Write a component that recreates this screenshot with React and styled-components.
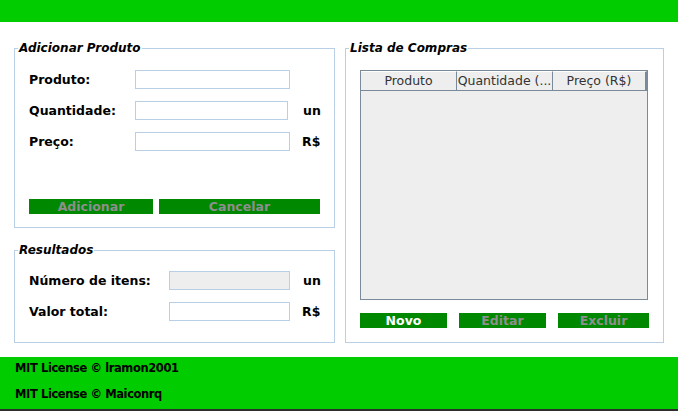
import React from 'react';
import styled, { createGlobalStyle } from 'styled-components';

const GlobalStyle = createGlobalStyle`
  html, body {
    margin: 0;
    padding: 0;
    background: #ffffff;
  }
  body {
    font-family: "DejaVu Sans", sans-serif;
    color: #000000;
  }
`

const Window = styled.div`
  width: 678px;
  height: 411px;
  display: flex;
  flex-direction: column;
  background: #ffffff;
  overflow: hidden;
`
const Topbar = styled.div`
  height: 22px;
  background: #00cc00;
`
const Main = styled.div`
  height: 335px;
  box-sizing: border-box;
  padding: 19px 0 0 14px;
  display: flex;
  gap: 10px;
`
const LeftColumn = styled.div`
  width: 321px;
  display: flex;
  flex-direction: column;
  gap: 15px;
`
const Panel = styled.fieldset`
  margin: 0;
  min-width: 0;
  box-sizing: border-box;
  height: ${p => p.h}px;
  width: ${p => p.w}px;
  border: 1px solid #b8cfe5;
  padding: ${p => p.pad};
  display: flex;
  flex-direction: column;
`
const Title = styled.legend`
  font-family: "DejaVu Sans", sans-serif;
  font-size: 12px;
  font-weight: bold;
  font-style: italic;
  line-height: 14px;
  padding: 0 1px;
  margin-left: -11px;
`
const Form = styled.div`
  display: grid;
  grid-template-columns: ${p => p.labelWidth}px ${p => p.fieldWidth}px auto;
  row-gap: 12px;
  align-items: center;
`
const Label = styled.span`
  font-size: 12.5px;
  font-weight: bold;
  line-height: 19px;
`
const Field = styled.div`
  box-sizing: border-box;
  height: 19px;
  width: ${p => p.w || '100%'};
  border: 1px solid #b8cfe5;
  background: ${p => (p.readOnly ? '#eeeeee' : '#ffffff')};
`
const Unit = styled.span`
  font-size: 12.5px;
  font-weight: bold;
  margin-left: ${p => p.ml || 13}px;
`
const ButtonRow = styled.div`
  display: flex;
  gap: ${p => p.gap}px;
  margin-top: ${p => p.mt}px;
`
const Button = styled.div`
  box-sizing: border-box;
  width: ${p => p.w}px;
  height: 15px;
  background: #008800;
  color: ${p => (p.active ? '#ffffff' : '#8e8e8e')};
  font-size: 12.5px;
  font-weight: bold;
  line-height: 15px;
  text-align: center;
`
const Table = styled.div`
  box-sizing: border-box;
  height: 230px;
  width: 288px;
  border: 1px solid #7a8a99;
  background: #eeeeee;
  display: flex;
  flex-direction: column;
`
const HeaderRow = styled.div`
  display: flex;
  height: 19px;
  border-bottom: 1px solid #7a8a99;
`
const HeaderCell = styled.div`
  box-sizing: border-box;
  width: ${p => p.w}px;
  border-right: ${p => (p.last ? '2px' : '1px')} solid #7a8a99;
  border-top: 1px solid #ffffff;
  padding: 0;
  font-size: 12.5px;
  line-height: 18px;
  color: #333333;
  text-align: center;
  white-space: nowrap;
  overflow: hidden;
`
const Footer = styled.div`
  height: 52px;
  background: #00cc00;
  padding-left: 15px;
  display: flex;
  flex-direction: column;
`
const FooterLine = styled.div`
  height: 26px;
  line-height: 22px;
  font-size: 11.5px;
  font-weight: bold;
  letter-spacing: -0.4px;
`
const BottomEdge = styled.div`
  height: 2px;
  background: #2d2d2d;
`

export default function App() {
  return (
    <>
      <GlobalStyle />
      <Window>
        <Topbar />
        <Main>
          <LeftColumn>
            <Panel h={187} w={321} pad="15px 13px 13px 14px">
              <Title>Adicionar Produto</Title>
              <Form labelWidth={106} fieldWidth={155}>
                <Label>Produto:</Label>
                <Field />
                <span />
                <Label>Quantidade:</Label>
                <Field w="153px" />
                <Unit>un</Unit>
                <Label>Preço:</Label>
                <Field />
                <Unit ml={12}>R$</Unit>
              </Form>
              <ButtonRow gap={6} mt={48}>
                <Button w={124}>Adicionar</Button>
                <Button w={161}>Cancelar</Button>
              </ButtonRow>
            </Panel>
            <Panel h={100} w={321} pad="14px 13px 13px 14px">
              <Title>Resultados</Title>
              <Form labelWidth={140} fieldWidth={121}>
                <Label>Número de itens:</Label>
                <Field readOnly />
                <Unit>un</Unit>
                <Label>Valor total:</Label>
                <Field />
                <Unit ml={12}>R$</Unit>
              </Form>
            </Panel>
          </LeftColumn>
          <Panel h={302} w={319} pad="15px 14px 14px 14px">
            <Title>Lista de Compras</Title>
            <Table>
              <HeaderRow>
                <HeaderCell w={96}>Produto</HeaderCell>
                <HeaderCell w={96}>Quantidade (...</HeaderCell>
                <HeaderCell w={94} last>Preço (R$)</HeaderCell>
              </HeaderRow>
            </Table>
            <ButtonRow gap={12} mt={13}>
              <Button w={87} active>Novo</Button>
              <Button w={87}>Editar</Button>
              <Button w={91}>Excluir</Button>
            </ButtonRow>
          </Panel>
        </Main>
        <Footer>
          <FooterLine>MIT License © lramon2001</FooterLine>
          <FooterLine>MIT License © Maiconrq</FooterLine>
        </Footer>
        <BottomEdge />
      </Window>
    </>
  );
}
